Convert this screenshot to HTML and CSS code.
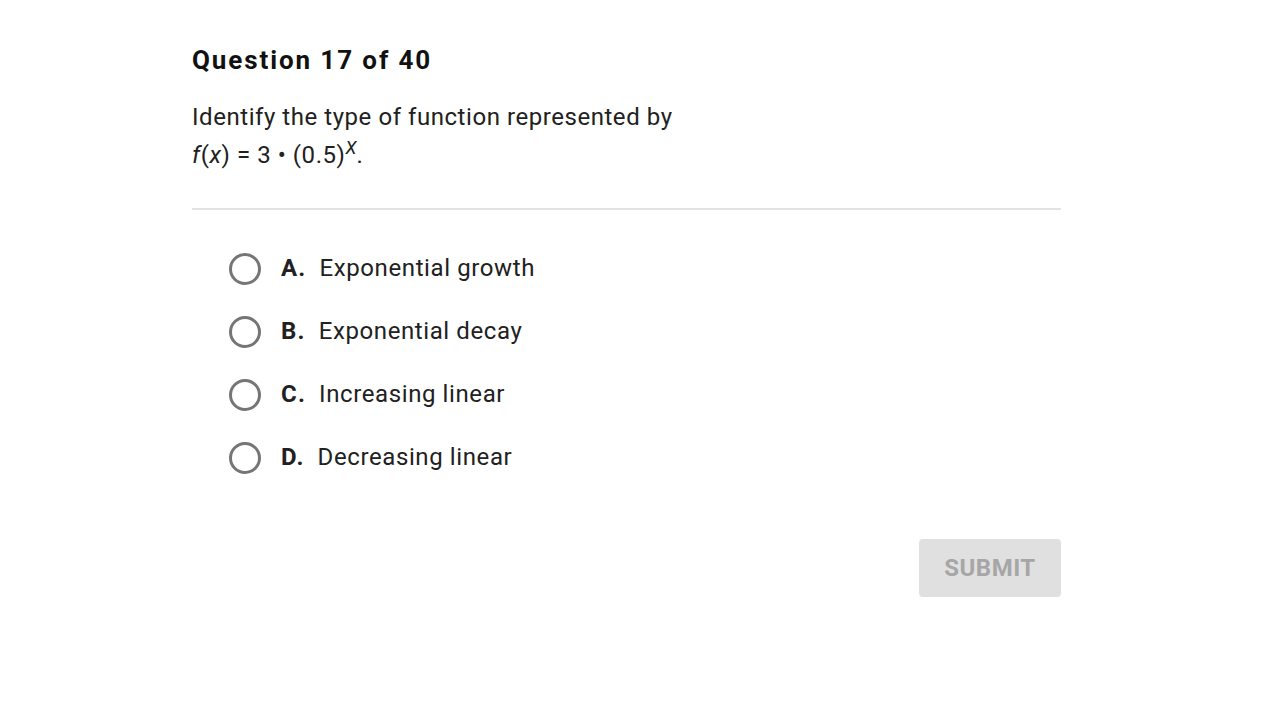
FILE: index.html
```html
<!DOCTYPE html>
<html>
<head>
<meta charset="utf-8">
<link rel="stylesheet" href="styles.css">
</head>
<body>
<main class="page">
  <h1 class="title">Question 17 of 40</h1>
  <p class="prompt">Identify the type of function represented by<br><i>f</i>(<i>x</i>) = 3 • (0.5)<sup class="exp"><i>X</i></sup>.</p>
  <hr class="divider">
  <ul class="options">
    <li class="option"><span class="radio"></span><span class="letter">A.</span><span class="text">Exponential growth</span></li>
    <li class="option"><span class="radio"></span><span class="letter">B.</span><span class="text">Exponential decay</span></li>
    <li class="option"><span class="radio"></span><span class="letter">C.</span><span class="text">Increasing linear</span></li>
    <li class="option"><span class="radio"></span><span class="letter">D.</span><span class="text">Decreasing linear</span></li>
  </ul>
  <div class="actions"><button class="submit">SUBMIT</button></div>
</main>
</body>
</html>
```
FILE: styles.css
```css
html, body {
  margin: 0;
  padding: 0;
  background: #fff;
}
body {
  font-family: Roboto, "Liberation Sans", sans-serif;
  color: #212121;
}
.page {
  width: 869px;
  margin-left: 192px;
  padding-top: 43px;
}
.title {
  margin: 0;
  font-size: 26px;
  font-weight: 700;
  letter-spacing: 1.9px;
  line-height: 34px;
  color: #111;
}
.prompt {
  margin: 21px 0 0;
  font-size: 24px;
  line-height: 38px;
  letter-spacing: 0.55px;
}
.exp {
  font-size: 18px;
  line-height: 0;
  vertical-align: 9px;
  letter-spacing: 0;
}
.divider {
  margin: 34px 0 0;
  border: 0;
  height: 2px;
  background: #e3e3e3;
}
.options {
  list-style: none;
  margin: 26px 0 0;
  padding: 0 0 0 37px;
}
.option {
  display: flex;
  align-items: center;
  height: 63px;
  font-size: 24px;
  letter-spacing: 0.6px;
}
.radio {
  width: 26px;
  height: 26px;
  border: 3px solid #757575;
  border-radius: 50%;
  margin-right: 20px;
  margin-top: 3px;
  flex: none;
}
.letter {
  font-weight: 700;
  margin-right: 13px;
  letter-spacing: 1.2px;
}
.actions {
  display: flex;
  justify-content: flex-end;
  margin-top: 51px;
}
.submit {
  width: 142px;
  height: 58px;
  border: 0;
  border-radius: 4px;
  background: #e0e0e0;
  color: #a6a6a6;
  font-family: Roboto, "Liberation Sans", sans-serif;
  font-size: 24px;
  font-weight: 700;
  letter-spacing: 0.5px;
}
```
